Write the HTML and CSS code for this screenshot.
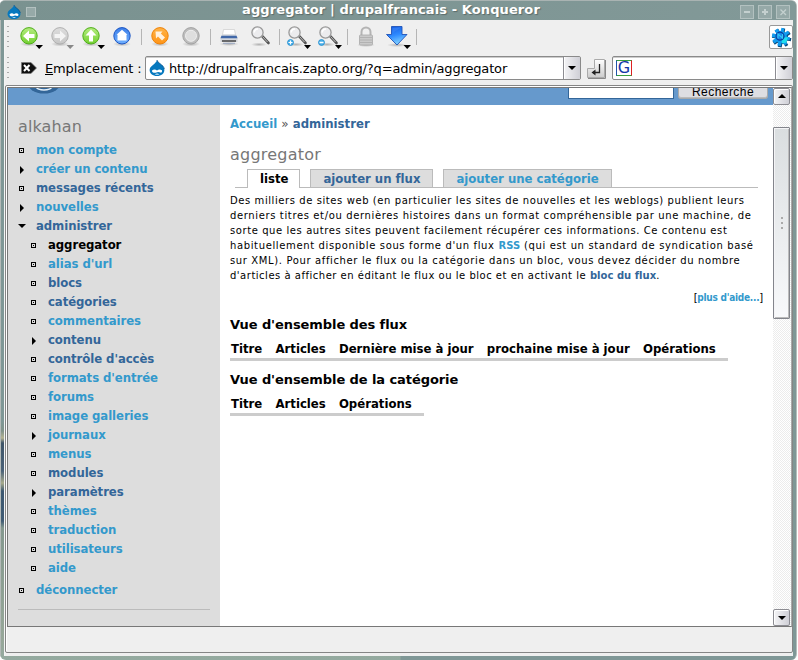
FILE: index.html
```
<!DOCTYPE html>
<html lang="fr">
<head>
<meta charset="utf-8">
<title>aggregator | drupalfrancais - Konqueror</title>
<link rel="stylesheet" href="styles.css">
</head>
<body>
<svg width="0" height="0" class="defs">
  <defs>
    <linearGradient id="green" x2="0" y2="1"><stop offset="0" stop-color="#b5ec80"/><stop offset="1" stop-color="#72d030"/></linearGradient>
    <linearGradient id="silver" x2="0" y2="1"><stop offset="0" stop-color="#dedede"/><stop offset="1" stop-color="#c6c6c6"/></linearGradient>
    <linearGradient id="blue" x2="0" y2="1"><stop offset="0" stop-color="#3d7fe8"/><stop offset="1" stop-color="#6fb0ff"/></linearGradient>
    <linearGradient id="orange" x2="0" y2="1"><stop offset="0" stop-color="#ffb347"/><stop offset="1" stop-color="#ff9416"/></linearGradient>
    <linearGradient id="down" x2="0.3" y2="1"><stop offset="0" stop-color="#1259e0"/><stop offset=".55" stop-color="#2f8bff"/><stop offset="1" stop-color="#7fd0ff"/></linearGradient>
    <radialGradient id="shade"><stop offset="0" stop-color="#888" stop-opacity=".6"/><stop offset="1" stop-color="#888" stop-opacity="0"/></radialGradient>
    <symbol id="drop" viewBox="0 0 16 16">
      <path d="M8 0C8.300 3 14.500 4.500 15.300 9C16 13.500 12 16 8 16C4 16 0 13.500 .7 9C1.500 5.500 7 4 8 0Z" fill="#0678be"/>
      <path d="M3 10.500Q5.500 8.500 8 10.500Q10.500 8.500 13 10.300Q13.500 13 11.500 12.600Q9.500 11.500 8 12.200Q6 13.300 4 12.600Q2.800 12 3 10.500Z" fill="#fff"/>
      <path d="M5.800 14.200Q8 13 10.400 14.200Q8 15.300 5.800 14.200Z" fill="#cfe8f8"/>
      <path d="M8 0C8.300 3 14.500 4.500 15.300 9" fill="none" stroke="#06508c" stroke-width=".8"/>
    </symbol>
    <symbol id="lens" viewBox="0 0 31 33">
      <ellipse cx="14" cy="24.500" rx="8" ry="2" fill="url(#shade)"/>
      <path d="M17.500 16.500L23.500 23" stroke="#555" stroke-width="2.600" stroke-linecap="round"/>
      <path d="M17.500 16.500L22.500 22" stroke="#bbb" stroke-width="1"/>
      <circle cx="12.500" cy="12.500" r="5.600" fill="#ececee" stroke="#999" stroke-width="1.300"/>
      <path d="M9.200 12.500A3.500 3.500 0 0 1 13 9" fill="none" stroke="#fff" stroke-width="1.500"/>
    </symbol>
  </defs>
</svg>
<div class="window">
  <header class="titlebar">
    <svg class="app" width="14" height="14"><use href="#drop"/></svg>
    <i class="sticky"></i>
    <span class="caption">aggregator | drupalfrancais - Konqueror</span>
    <svg class="controls" width="52" height="14" shape-rendering="crispEdges"><g fill="#96a9a8" stroke="#b3c1c0"><rect x=".5" y=".5" width="13" height="13"/><rect x="18.500" y=".5" width="13" height="13"/><rect x="36.500" y=".5" width="13" height="13"/></g><path d="M4 7H10M22 7H28M25 4V10" stroke="#c4d0cf" stroke-width="1.500"/><path d="M40.500 4.500L46 10M46 4.500L40.500 10" stroke="#c4d0cf" stroke-width="1.300" shape-rendering="auto"/></svg>
  </header>

  <div class="client">
    <div class="toolbar">
      <i class="grip"></i>
      <svg width="31" height="33"><ellipse cx="15" cy="24" rx="9" ry="2.500" fill="url(#shade)"/><circle cx="15" cy="15.800" r="8.200" fill="url(#green)" stroke="#4fae1a"/><path d="M9 16L15 10.500V14H20.500V18H15V21.500Z" fill="#fff"/><path d="M21.500 25H29L25.200 29Z" fill="#000"/></svg>
      <svg width="31" height="33"><ellipse cx="15" cy="24" rx="9" ry="2.500" fill="url(#shade)"/><circle cx="15" cy="15.800" r="8.200" fill="url(#silver)" stroke="#b0b0b0"/><path d="M21 16L15 10.500V14H9.500V18H15V21.500Z" fill="#f4f4f4"/><path d="M21.500 25H29L25.200 29Z" fill="#888"/></svg>
      <svg width="31" height="33"><ellipse cx="15" cy="24" rx="9" ry="2.500" fill="url(#shade)"/><circle cx="15" cy="15.800" r="8.200" fill="url(#green)" stroke="#4fae1a"/><path d="M15 9.500L20.500 15.500H17V21.500H13V15.500H9.500Z" fill="#fff"/><path d="M21.500 25H29L25.200 29Z" fill="#000"/></svg>
      <svg width="31" height="33"><ellipse cx="15" cy="24" rx="9" ry="2.500" fill="url(#shade)"/><circle cx="15" cy="15.800" r="8.200" fill="url(#blue)" stroke="#1b55c4"/><path d="M15 9.800L20.500 14.800H19.500V20.500H10.500V14.800H9.500Z" fill="#fff"/></svg>
      <i class="sep"></i>
      <svg width="31" height="33"><ellipse cx="15" cy="24" rx="9" ry="2.500" fill="url(#shade)"/><circle cx="15" cy="15.800" r="8.200" fill="url(#orange)" stroke="#ee8208"/><path d="M10.500 11.500H17.500L15.800 13.500L20 17.500L17 20.500L13 16.500L11 18.500Z" fill="#fff1df"/></svg>
      <svg width="31" height="33"><ellipse cx="15" cy="24" rx="9" ry="2.500" fill="url(#shade)"/><circle cx="15" cy="15.800" r="8.200" fill="#bdbdbd" stroke="#a3a3a3"/><circle cx="15" cy="15.800" r="5.500" fill="#dedede" stroke="#eee"/></svg>
      <i class="sep"></i>
      <svg width="31" height="33"><ellipse cx="15" cy="24" rx="10" ry="2" fill="url(#shade)"/><path d="M9.500 9.500H20.500L21.500 15H8.500Z" fill="#fff" stroke="#ccc" stroke-width=".7"/><path d="M8 14.500H22L23.500 17.500V22H6.500V17.500Z" fill="#d4d7dd"/><path d="M7.500 15.800H22.500L23.500 18.200H6.500Z" fill="#4168a8"/><path d="M8 21H22" stroke="#444" stroke-width="1.500"/><path d="M9 23.300H21" stroke="#99a8c4"/></svg>
      <svg width="31" height="33"><use href="#lens"/></svg>
      <i class="sep"></i>
      <svg width="31" height="33"><use href="#lens"/><circle cx="8.500" cy="22.500" r="3" fill="#49aee8" stroke="#1686cc" stroke-width=".7"/><path d="M6.500 22.500H10.500M8.500 20.500V24.500" stroke="#fff" stroke-width="1.200"/><path d="M22 25H29L25.500 29Z"/></svg>
      <svg width="31" height="33"><use href="#lens"/><circle cx="8.500" cy="22.500" r="3" fill="#49aee8" stroke="#1686cc" stroke-width=".7"/><path d="M6.500 22.500H10.500" stroke="#fff" stroke-width="1.300"/><path d="M22 25H29L25.500 29Z"/></svg>
      <i class="sep"></i>
      <svg width="31" height="33"><ellipse cx="15" cy="25" rx="9" ry="2" fill="url(#shade)"/><path d="M10.500 15V12A4.500 4.500 0 0 1 19.500 12V15" fill="none" stroke="#b4b4b4" stroke-width="2"/><rect x="8.500" y="15" width="13" height="10" rx="1" fill="#cacaca" stroke="#a8a8a8" stroke-width=".8"/><path d="M9 17.500H21M9 20H21M9 22.500H21" stroke="#b2b2b2"/></svg>
      <svg width="31" height="33"><ellipse cx="15" cy="25" rx="10" ry="2" fill="url(#shade)"/><path d="M9.500 6.500H20V14.500H25L15 25L4.500 14.500H9.500Z" fill="url(#down)" stroke="#2052b8" stroke-width=".9"/><path d="M10.500 8L19 7.500L10.500 13Z" fill="#3d83f5" opacity=".6"/><path d="M21.500 25H29L25.200 29Z"/></svg>
      <i class="sep"></i>
      <span class="gear"><svg width="22" height="22" viewBox="-11 -11 22 22"><defs><g id="wheel"><circle r="6.300"/><path id="bar" d="M-1.600-9.600H1.600L2 9.600H-2Z"/><use href="#bar" transform="rotate(45)"/><use href="#bar" transform="rotate(90)"/><use href="#bar" transform="rotate(135)"/></g></defs><use href="#wheel" fill="#0a4a7a" transform="translate(.7 .8) rotate(12)"/><use href="#wheel" fill="#129cf0" transform="rotate(12) scale(.94)"/><path d="M0 1L7 0L5.500 5.500L1 6.500Z" fill="#20dfee"/><circle r="4" cx="-1" cy="-.8" fill="#1687ea" stroke="#0a3f9c" stroke-width="1.200"/><path d="M-3 1.500V-3L1.500 1V-3" fill="none" stroke="#35c9f5" stroke-width="1.100"/></svg></span>
    </div>

    <div class="location">
      <i class="grip"></i>
      <svg class="clear" width="16" height="14"><path d="M.5 1.500H10L15.500 7L10 12.500H.5Z" fill="#111" stroke="#777" stroke-width=".7"/><path d="M3 4L8.500 10M8.500 4L3 10" stroke="#fff" stroke-width="2"/></svg>
      <label><u>E</u>mplacement :</label>
      <div class="combo url"><svg width="16" height="16"><use href="#drop"/></svg><span>http://drupalfrancais.zapto.org/?q=admin/aggregator</span><b class="arrow"></b></div>
      <svg class="go" width="21" height="21"><defs><linearGradient id="k" x2="0" y2="1"><stop offset="0" stop-color="#fff"/><stop offset="1" stop-color="#ccc"/></linearGradient></defs><path d="M8.500 1.500H18.500V19.500H1.500V10.500H8.500Z" fill="url(#k)" stroke="#aaa"/><path d="M19.500 2V20.500H2" fill="none" stroke="#888"/><path d="M13.500 6V14.500H7" fill="none" stroke="#222" stroke-width="1.300"/><path d="M5.500 14.500L9.500 11.500V17.500Z" fill="#222"/></svg>
      <div class="combo find"><span class="g">G</span><b class="arrow"></b></div>
    </div>

    <div class="frame">
      <div class="view">
        <div class="page">
          <div class="banner">
            <svg width="32" height="6"><ellipse cx="16" cy="-6" rx="17" ry="11.500" fill="#369"/><ellipse cx="16" cy="-1" rx="7.500" ry="3" fill="none" stroke="#e4f0fa" stroke-width="1.500"/></svg>
            <i class="query"></i><span class="search">Recherche</span>
          </div>
          <div class="columns">
            <nav class="side">
              <h2>alkahan</h2>
              <ul>
                <li class="leaf"><a>mon compte</a></li>
                <li class="closed"><a>créer un contenu</a></li>
                <li class="leaf"><a class="seen">messages récents</a></li>
                <li class="closed"><a>nouvelles</a></li>
                <li class="open"><a class="seen">administrer</a></li>
              </ul>
              <ul class="sub">
                <li class="leaf"><a class="active">aggregator</a></li>
                <li class="leaf"><a>alias d'url</a></li>
                <li class="leaf"><a class="seen">blocs</a></li>
                <li class="leaf"><a class="seen">catégories</a></li>
                <li class="leaf"><a>commentaires</a></li>
                <li class="closed"><a class="seen">contenu</a></li>
                <li class="leaf"><a class="seen">contrôle d'accès</a></li>
                <li class="leaf"><a>formats d'entrée</a></li>
                <li class="leaf"><a>forums</a></li>
                <li class="leaf"><a>image galleries</a></li>
                <li class="closed"><a>journaux</a></li>
                <li class="leaf"><a>menus</a></li>
                <li class="leaf"><a class="seen">modules</a></li>
                <li class="closed"><a class="seen">paramètres</a></li>
                <li class="leaf"><a>thèmes</a></li>
                <li class="leaf"><a>traduction</a></li>
                <li class="leaf"><a>utilisateurs</a></li>
                <li class="leaf"><a>aide</a></li>
              </ul>
              <ul><li class="leaf"><a>déconnecter</a></li></ul>
              <hr>
            </nav>
            <main>
              <div class="crumbs"><a>Accueil</a> <span>»</span> <a class="seen">administrer</a></div>
              <h1>aggregator</h1>
              <div class="tabs"><span class="tab current">liste</span><span class="tab seen">ajouter un flux</span><span class="tab">ajouter une catégorie</span></div>
              <p class="help">Des milliers de sites web (en particulier les sites de nouvelles et les weblogs) publient leurs<br><span class="loose">derniers titres et/ou dernières histoires dans un format compréhensible par une machine, de</span><br>sorte que les autres sites peuvent facilement récupérer ces informations. Ce contenu est<br><span class="loose">habituellement disponible sous forme d'un flux <a>RSS</a> (qui est un standard de syndication basé</span><br><span class="loose">sur XML). Pour afficher le flux ou la catégorie dans un bloc, vous devez décider du nombre</span><br><span class="tight">d'articles à afficher en éditant le flux ou le bloc et en activant le <a class="seen">bloc du flux</a>.</span></p>
              <div class="more">[<a>plus d'aide...</a>]</div>
              <h3>Vue d'ensemble des flux</h3>
              <table><tr><th>Titre</th><th>Articles</th><th>Dernière mise à jour</th><th>prochaine mise à jour</th><th>Opérations</th></tr></table>
              <h3>Vue d'ensemble de la catégorie</h3>
              <table><tr><th>Titre</th><th>Articles</th><th>Opérations</th></tr></table>
            </main>
          </div>
        </div>
        <div class="scroll">
          <b class="arrow up"></b>
          <div class="thumb"><i></i><i></i><i></i></div>
          <b class="arrow"></b>
        </div>
      </div>
    </div>
  </div>
</div>
</body>
</html>
```
FILE: styles.css
```
*, *::before { box-sizing: border-box; }
body { margin: 0; background: #fff; font: 13px "DejaVu Sans", sans-serif; color: #000; overflow: hidden; }
.defs { display: block; }
svg { display: block; flex: none; }
i { display: block; }

.window {
  width: 797px; height: 660px; padding: 0 4px;
  border-top: 1px solid #a9b3b2; border-right: 1px solid #b5bdbb;
  border-radius: 5px 6px 6px 6px;
  background: linear-gradient(90deg, #b4bab8 1px, transparent 1px), linear-gradient(90deg, transparent 400px, #7f9796 401px), linear-gradient(#7f9796 0, #7f9796 420px, #81938a 430px, #b5b393 437px, #3f5568 442px, #4b6278 470px, #a8ab8c 482px, #3d5870 490px, #415c74 520px, #84988e 527px, #97a799 640px, #94aaa0 100%);
  overflow: hidden;
}

.titlebar { display: flex; align-items: center; height: 19px; margin: 0 -4px; padding: 2px 4px 0 7px; background: linear-gradient(90deg, #7a9290, #829998); }
.sticky { width: 10px; height: 10px; margin: 0 0 0 5px; border: 1px solid #b3c1c0; background: #96a9a8; }
.caption {
  flex: 1; padding-right: 46px; margin-top: -5px; text-align: center; white-space: nowrap;
  font-weight: bold; letter-spacing: .1px; color: #fff; text-shadow: 1px 1px 1px #5b6b6a;
}
.controls { margin-left: -52px; }

.client { width: 789px; height: 636px; background: #efefef; display: flex; flex-direction: column; border-left: 1px solid #f4f4f4; }
.toolbar { display: flex; align-items: center; height: 33px; }
.grip { width: 2px; height: 22px; margin: 0 6px 0 2px; background: repeating-linear-gradient(#aaa 0 1px, transparent 1px 5px); }
.toolbar .grip { margin-right: 5px; }
.sep { width: 1px; height: 16px; margin: 0 3px; background: #b5b5b5; }
.toolbar .sep { margin-right: 2.8px; }
.gear { width: 24px; height: 24px; margin-left: auto; border: 1px solid #999; border-radius: 2px; background: #fff; }

.location { display: flex; align-items: center; height: 32px; padding-bottom: 2px; }
.clear { margin-left: 6px; }
label { width: 99px; margin-left: 8px; letter-spacing: -.14px; white-space: nowrap; }
.combo { display: flex; align-items: center; height: 24px; border: 1px solid #8a8a8a; border-radius: 2px; background: #fff; overflow: hidden; white-space: nowrap; box-shadow: inset 0 1px #ccc; }
.url { width: 436px; padding-left: 3px; margin-left: 1px; }
.url span { margin-left: 4px; letter-spacing: -.16px; }
.go { margin: 0 5px; }
.find { flex: 1; padding-left: 3px; }
.g { width: 16px; height: 16px; border: 1px solid #3a9d3f; border-right-color: #d22; border-left-color: #25a; font: 16px/14px "DejaVu Sans", sans-serif; color: #1436a8; text-align: center; }
.arrow {
  position: relative; flex: none; width: 17px; height: 17px; border: 1px solid #8c8c92; border-radius: 2px;
  background: linear-gradient(90deg, #f4f4f6, #cfcfd6); box-shadow: inset 1px 1px #fff;
}
.arrow::after { content: ""; position: absolute; left: 4px; top: 6px; border: 4px solid transparent; border-top-color: #000; border-bottom: 0; }
.arrow.up::after { border: 4px solid transparent; border-top: 0; border-bottom-color: #000; top: 5px; }
.combo .arrow { margin-left: auto; height: 24px; border-width: 0 0 0 1px; border-radius: 0; }
.combo .arrow::after { top: 10px; }

.frame { height: 568px; border: 1px solid #858585; border-radius: 2px; padding: 1px; width: 788px; box-shadow: inset 1px 1px #fff; }
.view { display: flex; height: 540px; width: 785px; border: 1px solid #777; border-right-color: #aaa; background: #fff; }
.page { width: 765px; height: 538px; overflow: hidden; }
.banner { display: flex; align-items: flex-start; height: 17px; background: #69c; }
.banner svg { margin-left: 20px; }
.query { width: 106px; height: 11px; margin-left: 508px; border: 1px solid #369; border-top: 0; background: #fff; }
.search { width: 90px; height: 11px; margin-left: 4px; border: 1px solid #aaa; border-top: 0; border-radius: 0 0 3px 3px; background: #dedee2; font: 12px/9px "Liberation Sans", sans-serif; letter-spacing: .45px; text-align: center; box-shadow: inset 0 -1px #bbb; }
.columns { display: flex; height: 521px; }

a, .tab, th { font-family: "DejaVu Sans Condensed", "DejaVu Sans", sans-serif; font-stretch: condensed; font-weight: bold; }
a, .tab { color: #39c; }
a.seen, .tab.seen { color: #369; }
a.active, .tab.current { color: #000; }

.side { width: 212px; padding: 12px 10px 0; background: #ddd; }
h1, h2 { margin: 0; font-weight: normal; font-size: 16px; line-height: 19px; color: #777; letter-spacing: .13px; }
.side h2 { margin-bottom: 4px; }
ul { margin: 0; padding: 0; list-style: none; }
li { display: flex; align-items: center; height: 19px; letter-spacing: -.07px; }
.sub { padding-left: 12px; margin-bottom: 3px; }
li::before { content: ""; flex: none; margin-right: 12px; }
.leaf::before { width: 5px; height: 5px; margin-left: 1px; margin-top: 2px; border: 1px solid #000; background: linear-gradient(#000, #000) center / 1px 1px no-repeat; }
.closed::before { margin-left: 2px; margin-top: 2px; border: 4px solid transparent; border-left-color: #000; border-right: 0; }
.open::before { margin-right: 10px; border: 4px solid transparent; border-top-color: #000; border-bottom: 0; }
hr { height: 1px; margin: 10px 0 0; border: 0; background: #bbb; }

main { flex: 1; padding: 9px 10px 0; }
.crumbs { height: 19px; line-height: 19px; white-space: nowrap; font-size: 13px; }
.crumbs span { font-size: 12px; color: #555; }
h1 { margin-top: 12px; letter-spacing: .22px; }
.tabs { display: flex; gap: 10px; width: 523px; height: 19px; margin: 5px 0 0 5px; padding-left: 12px; border-bottom: 1px solid #bbb; }
.tab { height: 18px; padding: 0 12px; border: 1px solid #bbb; border-bottom: 0; background: #ddd; line-height: 18px; white-space: nowrap; letter-spacing: -.02px; }
.tab.current { height: 19px; padding-right: 11px; background: #fff; }
.help { margin: 5px 0 0; font-size: 10px; line-height: 15px; letter-spacing: .58px; white-space: nowrap; }
.help .loose { letter-spacing: .63px; }
.help .tight { letter-spacing: .51px; }
.help a { font-family: "DejaVu Sans", sans-serif; font-stretch: normal; letter-spacing: .03px; }
.more { margin-top: 7px; font-size: 10px; line-height: 15px; text-align: right; letter-spacing: -.25px; }
h3 { margin: 9px 0 0; font-size: 13px; line-height: 19px; letter-spacing: -.08px; }
.more + h3 { margin-top: 10px; }
table { margin-top: 5px; border-collapse: separate; border-spacing: 0; }
th { padding: 0 12.200px 0 1px; height: 22px; line-height: 19px; text-align: left; vertical-align: top; white-space: nowrap; border-bottom: 3px solid #ccc; }

.scroll { width: 18px; height: 538px; display: flex; flex-direction: column; background: repeating-conic-gradient(#ececec 0 25%, #fff 0 50%) 0 0 / 2px 2px; }
.thumb { display: flex; flex-direction: column; align-items: center; justify-content: center; gap: 3px; width: 17px; height: 192px; margin: 22px 0 auto; border: 1px solid #83858c; border-radius: 1px; background: linear-gradient(#dadee0, #f8f9fb); box-shadow: inset 1px 1px #f4f4f6, inset -1px -1px #bbb; }
.thumb i { width: 2px; height: 2px; background: #aaa; }
```
